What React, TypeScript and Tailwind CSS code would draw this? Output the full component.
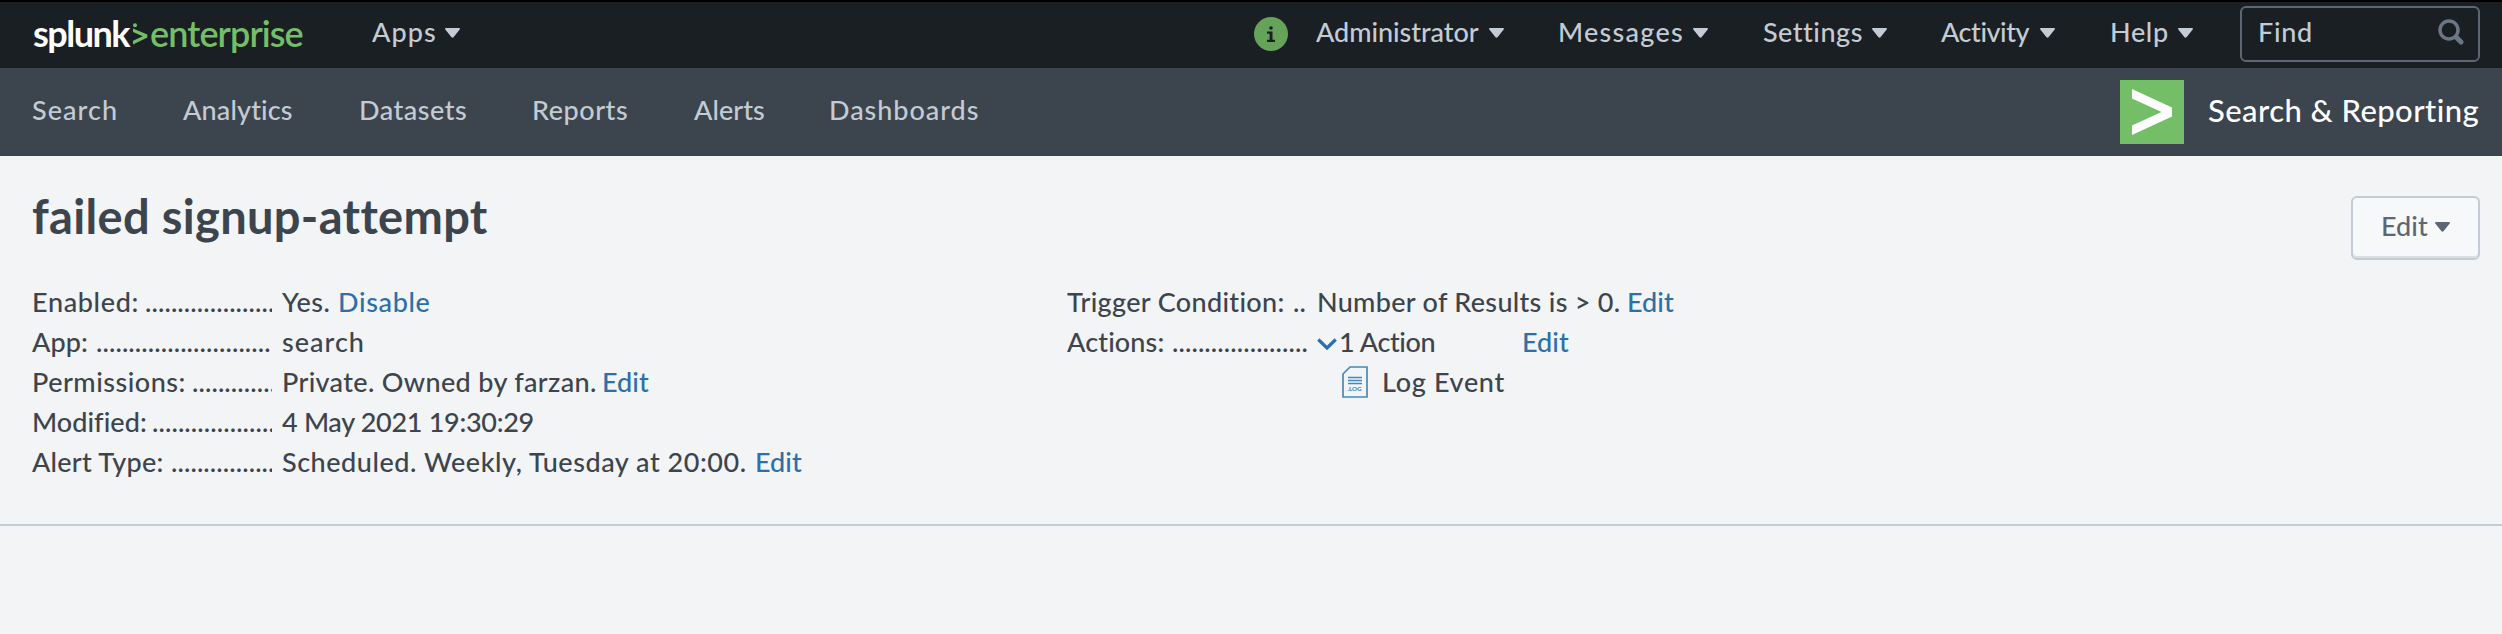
import type { ReactNode } from "react";

function Caret({ className = "" }: { className?: string }) {
  return (
    <svg viewBox="0 0 15 10" className={`h-[10px] w-[15px] shrink-0 ${className}`} fill="currentColor">
      <path d="M1 0h13c.9 0 1.300.9.7 1.600L8.500 9.300c-.500.600-1.500.600-2 0L.3 1.600C-.3.900.1 0 1 0z" />
    </svg>
  );
}

function MenuItem({ label, className }: { label: string; className: string }) {
  return (
    <div className="flex shrink-0 items-center">
      <span className={`shrink-0 ${className}`}>{label}</span>
      <Caret className="mt-[2px]" />
    </div>
  );
}

function Logo() {
  return (
    <div className="flex w-[340px] shrink-0 items-center pt-[1px] text-[36px] leading-[50px]">
      <span className="w-[100px] shrink-0 pl-[1px] font-bold tracking-[-1.500px] text-white">splunk</span>
      <svg viewBox="0 0 16 22" className="mt-[3px] h-[22px] w-[16px] shrink-0" fill="#74be68">
        <circle cx="3" cy="2.200" r="2" />
        <path d="M1 5.500L15.300 11.600v3L1 21.500v-3.700l9.800-4.600L1 9z" />
      </svg>
      <span className="ml-[2px] font-semibold tracking-[-0.900px] text-[#74be68]">enterprise</span>
    </div>
  );
}

function Link({ children, className = "tracking-[0.070px]" }: { children: ReactNode; className?: string }) {
  return <a href="#" className={`text-[#2b70ab] ${className}`}>{children}</a>;
}

function Row({
  label,
  labelClass,
  dots,
  children,
}: {
  label: string;
  labelClass: string;
  dots: number;
  children: ReactNode;
}) {
  return (
    <div className="flex h-[40px] items-center">
      <div className="flex w-[240px] shrink-0 overflow-hidden">
        <span className={`shrink-0 ${labelClass}`}>{label}</span>
        <span className="tracking-[0.100px]">{".".repeat(dots)}</span>
      </div>
      <div className="flex items-center pl-[10px]">{children}</div>
    </div>
  );
}

export default function App() {
  return (
    <div className="flex min-h-screen w-full flex-col whitespace-nowrap bg-[#f2f4f5] font-['Lato',sans-serif] text-[27px] font-medium leading-[40px] text-[#3c444d]">
      <header className="flex h-[68px] items-center justify-between border-t-2 border-black bg-[#1a1f23] pl-[32px] pr-[22px] text-[#c3cbd4]">
        <div className="flex items-center pb-[6px]">
          <Logo />
          <MenuItem label="Apps" className="w-[73px] tracking-[1.100px]" />
        </div>
        <div className="flex items-center">
          <div className="mb-[2px] mr-[28px] flex size-[34px] shrink-0 items-center justify-center rounded-full bg-[#65a35b]">
            <svg viewBox="0 0 10 16" className="h-[16px] w-[10px]" fill="#1a1f23">
              <circle cx="5" cy="2" r="1.800" />
              <path d="M1 5.500h5.500v8.300H9V16H1v-2.200h2.600V7.700H1z" />
            </svg>
          </div>
          <div className="flex items-center pb-[6px]">
            <MenuItem label="Administrator" className="w-[173px] tracking-[-0.050px]" />
            <div className="w-[54px]" />
            <MenuItem label="Messages" className="w-[135px] tracking-[1.250px]" />
            <div className="w-[55px]" />
            <MenuItem label="Settings" className="w-[109px] tracking-[0.500px]" />
            <div className="w-[54px]" />
            <MenuItem label="Activity" className="w-[99px] tracking-[-0.450px]" />
            <div className="w-[55px]" />
            <MenuItem label="Help" className="w-[68px] tracking-[0.650px]" />
          </div>
          <div className="mb-[2px] ml-[47px] flex h-[56px] w-[240px] shrink-0 items-center justify-between rounded-[6px] border-2 border-[#5c6773] pb-[4px] pl-[16px] pr-[14px]">
            <span className="tracking-[0.700px]">Find</span>
            <svg viewBox="0 0 26 26" className="size-[26px]" fill="none" stroke="#6b7785" strokeLinecap="round">
              <circle cx="11" cy="11" r="9" strokeWidth="3.500" />
              <path d="M18 18l5 5" strokeWidth="5" />
            </svg>
          </div>
        </div>
      </header>

      <nav className="flex h-[88px] items-center justify-between bg-[#3c444d] pl-[32px] pr-[22px] text-[#c3cbd4]">
        <div className="flex pb-[4px]">
          <span className="w-[151px] tracking-[1.050px]">Search</span>
          <span className="w-[176px] tracking-[0.150px]">Analytics</span>
          <span className="w-[173px] tracking-[0.500px]">Datasets</span>
          <span className="w-[162px] tracking-[0.550px]">Reports</span>
          <span className="w-[135px] tracking-[0.050px]">Alerts</span>
          <span className="tracking-[0.950px]">Dashboards</span>
        </div>
        <div className="flex items-center">
          <svg viewBox="0 0 64 64" className="size-[64px]">
            <path fill="#74be68" d="M0 0h64v64H0z" />
            <path fill="#fff" d="M12 9l40 18.500v9L12 55v-9.500L41.500 32 12 18.500z" />
          </svg>
          <span className="ml-[24px] w-[272px] pb-[4px] text-[31px] tracking-[0.440px] text-white">Search &amp; Reporting</span>
        </div>
      </nav>

      <main className="h-[370px] border-b-2 border-[#c3cbd4] pl-[32px] pr-[22px]">
        <div className="flex h-[126px] items-start justify-between">
          <h1 className="pt-[30px] text-[47px] font-bold leading-[60px] tracking-[0.330px]">failed signup-attempt</h1>
          <button className="mt-[40px] flex h-[64px] w-[129px] items-start rounded-[6px] border-2 border-[#c3cbd4] bg-[#f7f8fa] pl-[28px] pt-[8px] text-[#5c6773] shadow-[inset_0_-2px_0_#dcdfe1]">
            <span className="w-[54px] text-left tracking-[0.070px]">Edit</span>
            <Caret className="mt-[16px]" />
          </button>
        </div>
        <div className="flex">
          <section className="w-[1035px] shrink-0">
            <Row label="Enabled:" labelClass="w-[113px] tracking-[0.650px]" dots={20}>
              <span className="w-[56px] tracking-[0.470px]">Yes.</span>
              <Link className="tracking-[0.650px]">Disable</Link>
            </Row>
            <Row label="App:" labelClass="w-[64px] tracking-[0.100px]" dots={27}>
              <span className="tracking-[1.000px]">search</span>
            </Row>
            <Row label="Permissions:" labelClass="w-[160px] tracking-[0.500px]" dots={13}>
              <span className="w-[320px] tracking-[0.340px]">Private. Owned by farzan.</span>
              <Link>Edit</Link>
            </Row>
            <Row label="Modified:" labelClass="w-[120px] tracking-[0.060px]" dots={19}>
              <span className="tracking-[-0.300px]">4 May 2021 19:30:29</span>
            </Row>
            <Row label="Alert Type:" labelClass="w-[139px] tracking-[0.250px]" dots={16}>
              <span className="w-[473px] tracking-[0.540px]">Scheduled. Weekly, Tuesday at 20:00.</span>
              <Link>Edit</Link>
            </Row>
          </section>
          <section>
            <Row label="Trigger Condition:" labelClass="w-[226px] tracking-[0.340px]" dots={2}>
              <span className="w-[310px] tracking-[0.300px]">Number of Results is &gt; 0.</span>
              <Link>Edit</Link>
            </Row>
            <Row label="Actions:" labelClass="w-[105px] tracking-[0.140px]" dots={21}>
              <svg viewBox="0 0 20 13" className="mt-[4px] h-[13px] w-[20px]" fill="none" stroke="#2b70ab" strokeWidth="3.200">
                <path d="M1.300 1.500L10 10l8.700-8.500" />
              </svg>
              <span className="ml-[2px] w-[183px] tracking-[-0.400px]">1 Action</span>
              <Link>Edit</Link>
            </Row>
            <div className="flex h-[40px] items-center pl-[275px]">
              <svg viewBox="0 0 26 32" className="h-[32px] w-[26px]" fill="none" stroke="#4688bd" strokeWidth="1.700">
                <path d="M8 1h17v30H1V8z" />
                <path d="M6 11.500h14M6 14.500h14M6 17.500h14" />
                <text x="5.500" y="25" fontSize="6" fontWeight="900" fill="#4688bd" stroke="none" textLength="14" lengthAdjust="spacingAndGlyphs">.LOG</text>
              </svg>
              <span className="ml-[14px] tracking-[0.680px]">Log Event</span>
            </div>
          </section>
        </div>
      </main>
    </div>
  );
}
